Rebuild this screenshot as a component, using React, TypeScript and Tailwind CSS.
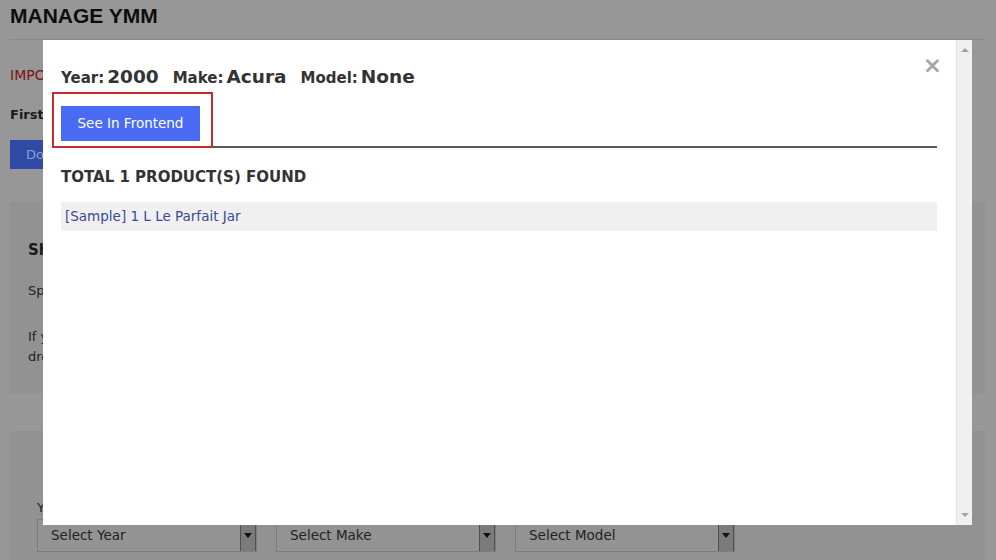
import React from "react";

const Select = ({ label }: { label: string }) => (
  <div className="flex h-[33px] w-[220px] items-stretch border border-[#7c7c7c] bg-[#939393]">
    <div className="flex flex-1 items-center pl-[13px] text-[13.5px] text-[#232323]">{label}</div>
    <div className="flex w-[16px] items-center justify-center border-l border-[#505050] border-r border-r-[#505050] bg-[#7b7b7b]">
      <svg width="8" height="5" viewBox="0 0 8 5"><path d="M0 0h8L4 5z" fill="#111" /></svg>
    </div>
  </div>
);

export default function App() {
  return (
    <div
      className="relative h-[560px] w-[996px] overflow-hidden bg-[#979797]"
      style={{ fontFamily: '"DejaVu Sans", Verdana, sans-serif' }}
    >
      {/* background page */}
      <div className="px-[10px]">
        <h1
          className="pt-[4px] text-[21px] font-bold leading-[24px] text-[#0d0d0d]"
          style={{ fontFamily: '"Liberation Sans", Arial, sans-serif' }}
        >
          MANAGE YMM
        </h1>
        <div className="mt-[11px] border-t border-[#8a8a8a]" />
        <p className="mt-[26px] text-[14px] leading-[18px] text-[#7c1212]">IMPORTANT: Please read the instructions</p>
        <p className="mt-[23px] text-[13px] font-bold leading-[16px] text-[#1a1a1a]">First time setup</p>
        <div className="mt-[17px] flex h-[29px] w-[120px] items-center bg-[#2f4ba5] pl-[16px] text-[13px] text-[#8d9dd6]">
          Download
        </div>
        <div className="mt-[33px] h-[192px] bg-[#929292] px-[18px] pt-[39px]">
          <p className="text-[15px] font-bold leading-[18px] text-[#1a1a1a]">Short codes</p>
          <p className="mt-[22px] text-[13px] leading-[20px] text-[#222]">Specify the shortcode</p>
          <p className="mt-[26px] text-[13px] leading-[20px] text-[#222]">If you want to</p>
          <p className="text-[13px] leading-[20px] text-[#222]">dropdown</p>
        </div>
        <div className="mt-[37px] h-[140px] bg-[#929292] px-[27px] pt-[67px]">
          <p className="text-[13px] leading-[20px] text-[#222]">Year</p>
          <div className="mt-[1px] flex gap-[19px]">
            <Select label="Select Year" />
            <Select label="Select Make" />
            <Select label="Select Model" />
          </div>
        </div>
      </div>

      {/* modal */}
      <div className="absolute left-[43px] top-[40px] flex h-[485px] w-[929px] bg-white">
        <div className="relative flex-1 pl-[18px] pr-[19px]">
          <button className="absolute right-[14px] top-[12px] text-[23px] font-bold leading-[26px] text-[#a6a6a6]">
            ×
          </button>
          <div className="flex items-baseline gap-[14px] pt-[26px] text-[#333]">
            <span className="text-[15px] font-bold leading-[22px]">
              Year:<span className="ml-[3px] text-[18.5px]">2000</span>
            </span>
            <span className="text-[15px] font-bold leading-[22px]">
              Make:<span className="ml-[3px] text-[18.5px]">Acura</span>
            </span>
            <span className="text-[15px] font-bold leading-[22px]">
              Model:<span className="ml-[3px] text-[18.5px]">None</span>
            </span>
          </div>
          <div className="mt-[17px] flex h-[35px] w-[139px] items-center justify-center bg-[#4a6cf5] text-[13.5px] text-white">
            See In Frontend
          </div>
          <div className="absolute left-[9px] top-[52px] h-[56px] w-[161px] border-2 border-[#c62a2e]" />
          <div className="mt-[5px] border-t-2 border-[#5a5a5a]" />
          <p className="mt-[20px] text-[15px] font-bold leading-[18px] text-[#333]">TOTAL 1 PRODUCT(S) FOUND</p>
          <div className="mt-[16px] flex h-[29px] items-center bg-[#f0f0f0] pl-[4px] text-[13.5px] text-[#3a4a94]">
            [Sample] 1 L Le Parfait Jar
          </div>
        </div>
        <div className="flex w-[16px] flex-col items-center justify-between border-l border-[#e4e4e4] bg-[#f0f0f0] py-[8px]">
          <svg width="8" height="4" viewBox="0 0 8 4"><path d="M0 4h8L4 0z" fill="#a3a3a3" /></svg>
          <svg width="8" height="4" viewBox="0 0 8 4"><path d="M0 0h8L4 4z" fill="#a3a3a3" /></svg>
        </div>
      </div>
    </div>
  );
}
